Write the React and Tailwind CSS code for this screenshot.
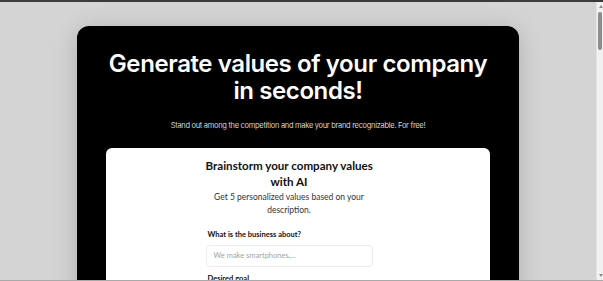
import React from 'react'

function Scrollbar() {
  return (
    <div className="relative w-[7px] h-full bg-[#f1f1f1] border-l border-[#e4e4e4]">
      <div className="absolute top-[3px] left-[2px] w-0 h-0 border-l-[2px] border-r-[2px] border-b-[3px] border-l-transparent border-r-transparent border-b-[#8a8a8a]" />
      <div className="absolute top-[10px] left-[1px] w-[4px] h-[38px] rounded-full bg-[#8c8c8c]" />
      <div className="absolute bottom-[3px] left-[2px] w-0 h-0 border-l-[2px] border-r-[2px] border-t-[3px] border-l-transparent border-r-transparent border-t-[#8a8a8a]" />
    </div>
  )
}

export default function App() {
  return (
    <div className="flex h-[281px] w-full overflow-hidden bg-[#d4d4d4] border-t-2 border-[#3b3b3b] border-b border-b-[#a9a9a9]">
      <main className="flex-1 h-full overflow-hidden">
        <section className="mx-auto mt-[24px] w-[442px] rounded-[12px] bg-black pt-[24px] px-[29px] shadow-[0_4px_24px_rgba(0,0,0,0.18)] min-h-[300px]">
          <h1 className="text-center text-white font-semibold text-[24px] leading-[27px] tracking-[-0.4px] whitespace-nowrap" style={{ fontFamily: 'Inter, "Noto Sans", sans-serif' }}>
            Generate values of your company<br />in seconds!
          </h1>
          <p className="mt-[16px] text-center text-[#d6d6d6] text-[7.5px] leading-[12px] tracking-[-0.3px] whitespace-nowrap" style={{ fontFamily: 'Inter, "Noto Sans", sans-serif' }}>
            Stand out among the competition and make your brand recognizable. For free!
          </p>
          <div className="mt-[16px] rounded-[6px] bg-white pt-[10px] pb-6 flex justify-center pr-[18px]" style={{ fontFamily: 'Lato, "Noto Sans", sans-serif' }}>
            <div className="w-[167px]">
              <h2 className="text-center font-bold text-[11.6px] leading-[16px] text-[#111] whitespace-nowrap">
                Brainstorm your company values<br />with AI
              </h2>
              <p className="mt-[1px] text-center text-[8.5px] leading-[13px] text-[#333] whitespace-nowrap">
                Get 5 personalized values based on your<br />description.
              </p>
              <label className="block mt-[13px] pl-[2px] font-bold text-[7.5px] leading-[10px] text-[#111]">
                What is the business about?
              </label>
              <input
                className="mt-[3px] w-full h-[22px] rounded-[4px] border border-[#ececec] px-[7px] text-[7.5px] text-[#333] placeholder-[#a3a3a3] outline-none"
                placeholder="We make smartphones,..."
              />
              <label className="block mt-[7px] pl-[2px] font-bold text-[7.5px] leading-[10px] text-[#111]">
                Desired goal
              </label>
            </div>
          </div>
        </section>
      </main>
      <Scrollbar />
    </div>
  )
}
